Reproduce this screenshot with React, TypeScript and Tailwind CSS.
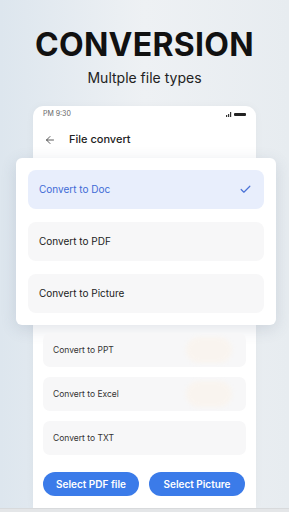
import { ArrowLeft, Check } from "lucide-react"

const mainItems = [
    { label: "Convert to Doc", active: true },
    { label: "Convert to PDF", active: false },
    { label: "Convert to Picture", active: false },
]

const backItems = ["Convert to PPT", "Convert to Excel", "Convert to TXT"]

const App = () => {
    return (
        <div
            className="w-[289px] h-[512px] overflow-hidden flex flex-col items-center bg-gradient-to-r from-[#dde6ee] via-[#eef1f4] to-[#e7ecf0]"
            style={{ fontFamily: "Inter, 'Noto Sans', sans-serif" }}
        >
            <h1 className="mt-[25px] text-[32px] leading-[40px] font-bold tracking-[0.3px] text-[#111]">CONVERSION</h1>
            <p className="mt-[4px] text-[14px] leading-[18px] text-[#222]">Multple file types</p>

            <div className="mt-[19px] w-[223px] flex-1 bg-white rounded-t-[10px] px-[10px] flex flex-col shadow-[0_0_8px_rgba(0,0,0,0.04)]">
                {/* status bar */}
                <div className="flex items-center justify-between h-[14px] mt-[1px] text-[7px] text-[#666]">
                    <span>PM 9:30</span>
                    <div className="flex items-end gap-[2px]">
                        <svg width="6" height="5" viewBox="0 0 6 5">
                            <rect x="0" y="3" width="1.2" height="2" fill="#333" />
                            <rect x="2" y="2" width="1.2" height="3" fill="#333" />
                            <rect x="4" y="0" width="1.2" height="5" fill="#333" />
                        </svg>
                        <div className="w-[12px] h-[3px] rounded-[1px] bg-[#222] mb-[1px]" />
                    </div>
                </div>

                {/* header */}
                <div className="flex items-center h-[37px] pl-[1px]">
                    <ArrowLeft className="w-[12px] h-[12px] text-[#333]" strokeWidth={1.6} />
                    <span className="ml-[13px] text-[11px] font-medium text-[#222]">File convert</span>
                </div>

                {/* floating menu */}
                <div className="-ml-[27px] -mr-[30px] bg-white rounded-[6px] px-[12px] py-[12px] flex flex-col gap-[13px] shadow-[0_4px_16px_rgba(60,80,110,0.16)]">
                    {mainItems.map((item) => (
                        <div
                            key={item.label}
                            className={
                                item.active
                                    ? "h-[39px] rounded-[8px] bg-[#e8eefc] flex items-center justify-between pl-[11px] pr-[12px]"
                                    : "h-[39px] rounded-[8px] bg-[#f7f7f8] flex items-center pl-[11px]"
                            }
                        >
                            <span className={item.active ? "text-[10px] text-[#3f6bd6]" : "text-[10px] text-[#222]"}>{item.label}</span>
                            {item.active && <Check className="w-[13px] h-[13px] text-[#4a72d6]" strokeWidth={2.2} />}
                        </div>
                    ))}
                </div>

                {/* list behind */}
                <div className="mt-[8px] flex flex-col gap-[10px]">
                    {backItems.map((label) => (
                        <div key={label} className="h-[34px] rounded-[7px] bg-[#f7f7f8] flex items-center justify-between pl-[10px] pr-[14px]">
                            <span className="text-[8.5px] text-[#333]">{label}</span>
                            {label !== "Convert to TXT" && (
                                <div className="w-[46px] h-[26px] rounded-full bg-[#fbf3ea] opacity-60 blur-[2px]" />
                            )}
                        </div>
                    ))}
                </div>

                {/* buttons */}
                <div className="mt-[17px] flex gap-[10px]">
                    <button className="w-[96px] h-[24px] rounded-full bg-[#3b7be9] text-white text-[10px] font-semibold">Select PDF file</button>
                    <button className="w-[96px] h-[24px] rounded-full bg-[#3b7be9] text-white text-[10px] font-semibold">Select Picture</button>
                </div>
            </div>
            <div className="w-full h-[4px] bg-[#e4e6e8] border-t border-[#d8dadc]" />
        </div>
    )
}

export default App
